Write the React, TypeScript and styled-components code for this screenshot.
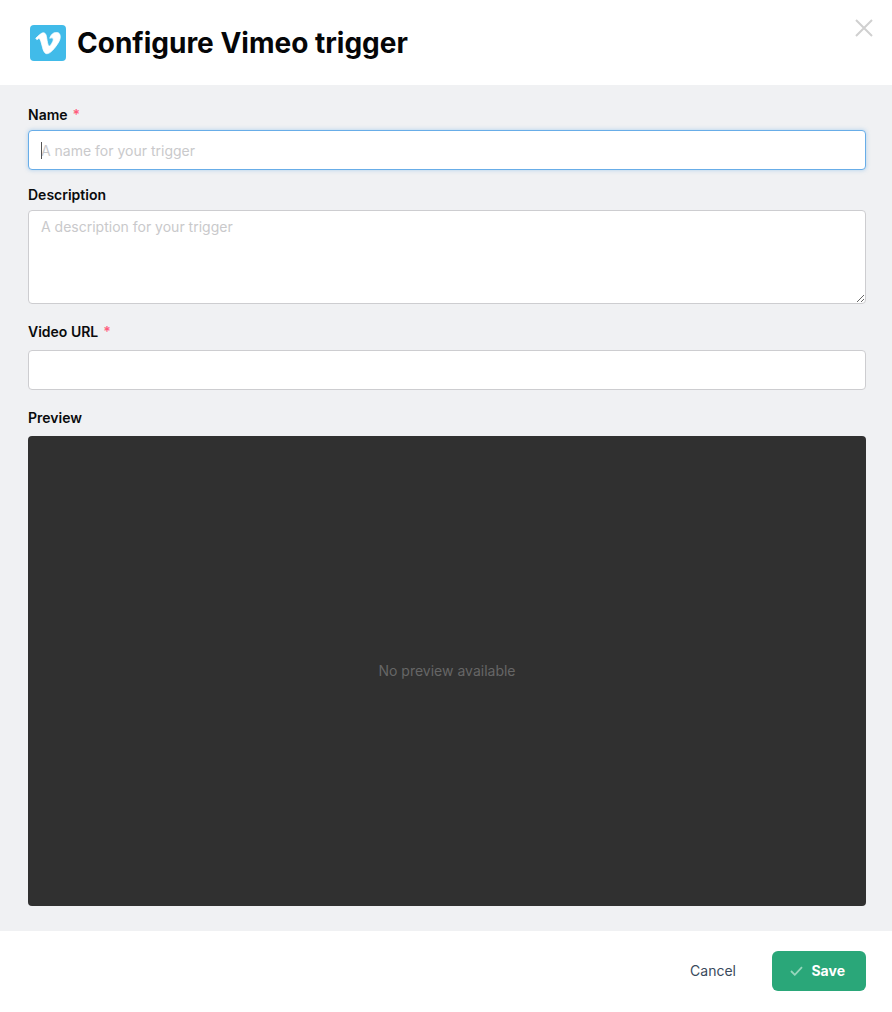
import React from "react";
import styled, { createGlobalStyle } from "styled-components";
import { FaVimeoV } from "react-icons/fa";

const Global = createGlobalStyle`
  html, body { margin: 0; padding: 0; background: #fff; }
  body { font-family: Inter, "Liberation Sans", sans-serif; }
  * { box-sizing: border-box; }
`;

const Modal = styled.div`
  position: relative;
  width: 892px;
  height: 1012px;
  display: flex;
  flex-direction: column;
  background: #fff;
`;

const Header = styled.header`
  height: 85px;
  flex: none;
  display: flex;
  align-items: center;
  gap: 11px;
  padding: 1px 0 0 30px;
`;

const Logo = styled.div`
  width: 36px;
  height: 36px;
  border-radius: 4px;
  background: #41bbe9;
  color: #fff;
  display: flex;
  align-items: center;
  justify-content: center;
`;

const Title = styled.h1`
  margin: 0;
  font-size: 28px;
  line-height: 36px;
  font-weight: 700;
  color: #050608;
`;

const Close = styled.button`
  position: absolute;
  top: 18px;
  right: 18px;
  width: 20px;
  height: 20px;
  padding: 0;
  border: 0;
  background: none;
  color: #d0d0d0;
  display: block;
`;

const Body = styled.main`
  flex: 1;
  background: #f0f1f3;
  padding: 20px 26px 25px 28px;
  display: flex;
  flex-direction: column;
`;

const Label = styled.label<{ $mb?: number }>`
  display: flex;
  align-items: center;
  gap: 5px;
  height: 20px;
  margin-bottom: ${(p) => p.$mb ?? 5}px;
  font-size: 14px;
  line-height: 20px;
  font-weight: 600;
  color: #0a0b0d;
`;

const Star = styled.span`
  color: #ff5c7c;
  font-weight: 600;
`;

const Field = styled.div<{ $mb: number; $grow?: boolean }>`
  margin-bottom: ${(p) => p.$mb}px;
  display: flex;
  flex-direction: column;
  ${(p) => (p.$grow ? "flex: 1;" : "")}
`;

const InputWrap = styled.div`
  position: relative;
`;

const Caret = styled.span`
  position: absolute;
  left: 13px;
  top: 12px;
  width: 1px;
  height: 17px;
  background: #555;
`;

const fieldStyles = `
  width: 100%;
  border: 1px solid #cdcdd0;
  border-radius: 4px;
  background: #fff;
  font-family: Inter, "Liberation Sans", sans-serif;
  font-size: 14px;
  color: #222;
  outline: none;
  &::placeholder { color: #c9c9cb; opacity: 1; }
  &:focus {
    border-color: #68ade8;
    box-shadow: 0 0 4px rgba(104, 173, 232, 0.5);
  }
`;

const TextInput = styled.input`
  ${fieldStyles}
  height: 40px;
  padding: 0 12px;
  display: block;
`;

const TextArea = styled.textarea`
  ${fieldStyles}
  height: 94px;
  padding: 7px 12px;
  line-height: 18px;
  display: block;
  resize: vertical;
`;

const Preview = styled.div`
  flex: 1;
  background: #303030;
  border-radius: 4px;
  display: flex;
  align-items: center;
  justify-content: center;
  color: #666;
  font-size: 14px;
  padding-bottom: 1px;
`;

const Footer = styled.footer`
  height: 81px;
  flex: none;
  display: flex;
  align-items: center;
  justify-content: flex-end;
  gap: 20px;
  padding: 0 26px 2px 0;
`;

const CancelButton = styled.button`
  height: 40px;
  padding: 0 16px;
  border: 0;
  background: none;
  font-family: inherit;
  font-size: 14px;
  color: #3a4a5c;
`;

const SaveButton = styled.button`
  width: 94px;
  height: 40px;
  padding: 0 21px 0 18px;
  border: 0;
  border-radius: 6px;
  background: #2aa779;
  color: #fff;
  font-family: inherit;
  font-size: 14px;
  font-weight: 700;
  display: flex;
  align-items: center;
  justify-content: space-between;
`;

const CheckIcon = styled.svg`
  width: 13px;
  height: 10px;
  color: #96d6bc;
`;

export default function App() {
  return (
    <Modal>
      <Global />
      <Header>
        <Logo>
          <FaVimeoV size={28} stroke="currentColor" strokeWidth={14} />
        </Logo>
        <Title>Configure Vimeo trigger</Title>
      </Header>
      <Close aria-label="Close">
        <svg width="20" height="20" viewBox="0 0 20 20" fill="none" stroke="currentColor" strokeWidth="2">
          <path d="M2 2 L18 18 M18 2 L2 18" />
        </svg>
      </Close>
      <Body>
        <Field $mb={15}>
          <Label>
            Name <Star>*</Star>
          </Label>
          <InputWrap>
            <TextInput autoFocus placeholder="A name for your trigger" />
            <Caret />
          </InputWrap>
        </Field>
        <Field $mb={18}>
          <Label>Description</Label>
          <TextArea placeholder="A description for your trigger" />
        </Field>
        <Field $mb={18}>
          <Label $mb={8}>
            Video URL <Star>*</Star>
          </Label>
          <TextInput />
        </Field>
        <Field $mb={0} $grow>
          <Label $mb={8}>Preview</Label>
          <Preview>No preview available</Preview>
        </Field>
      </Body>
      <Footer>
        <CancelButton>Cancel</CancelButton>
        <SaveButton>
          <CheckIcon viewBox="0 0 13 10" fill="none" stroke="currentColor" strokeWidth="1.8">
            <path d="M1 5 L4.8 8.8 L12 1.2" />
          </CheckIcon>
          Save
        </SaveButton>
      </Footer>
    </Modal>
  );
}
